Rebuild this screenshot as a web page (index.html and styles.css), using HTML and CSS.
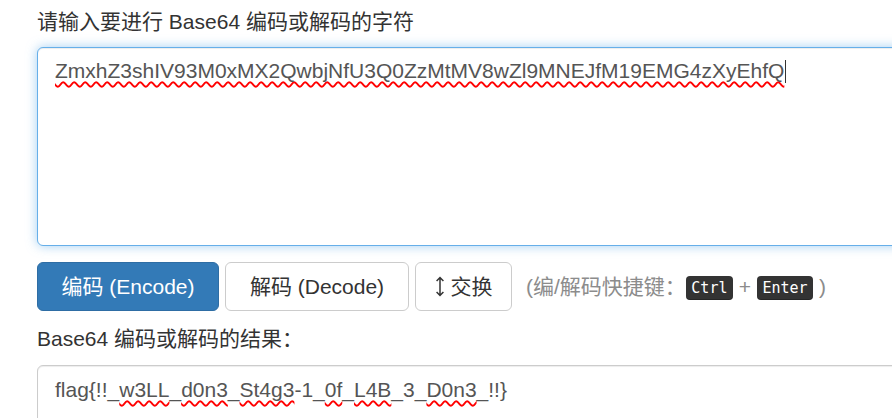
FILE: index.html
```html
<!DOCTYPE html>
<html lang="zh-CN">
<head>
    <meta charset="UTF-8">
    <meta name="viewport" content="width=device-width, initial-scale=1.0">
    <title>Base64 编码/解码</title>
    <link rel="stylesheet" href="styles.css">
</head>
<body>
    <div class="page">
        <label class="field-label" for="source">请输入要进行 Base64 编码或解码的字符</label>
        <div id="source" class="form-control source-box is-focused" role="textbox" aria-multiline="true"><span class="typo">ZmxhZ3shIV93M0xMX2QwbjNfU3Q0ZzMtMV8wZl9MNEJfM19EMG4zXyEhfQ</span><span class="caret"></span></div>

        <div class="actions">
            <button class="btn btn-primary btn-encode">编码 (Encode)</button>
            <button class="btn btn-default btn-decode">解码 (Decode)</button>
            <button class="btn btn-default btn-swap">
                <svg class="icon-swap" width="10" height="21" viewBox="0 0 10 21" aria-hidden="true">
                    <path d="M5 1.5v18M1.6 5L5 1.5 8.4 5M1.6 16L5 19.5 8.4 16" fill="none" stroke="#333" stroke-width="1.5"/>
                </svg>
                交换
            </button>
            <span class="hint">(编/解码快捷键：<kbd>Ctrl</kbd> + <kbd>Enter</kbd> )</span>
        </div>

        <label class="field-label result-label" for="result">Base64 编码或解码的结果：</label>
        <div id="result" class="form-control result-box" role="textbox" aria-readonly="true">flag{!!_<span class="typo">w3LL</span>_<span class="typo">d0n3</span>_<span class="typo">St4g3</span>-1_<span class="typo">0f</span>_<span class="typo">L4B</span>_3_<span class="typo">D0n3</span>_!!}</div>
    </div>
</body>
</html>
```

FILE: styles.css
```css
html, body {
    margin: 0;
    overflow: hidden;
    background: #fff;
}
body {
    font-family: "Liberation Sans", Arial, "Noto Sans CJK SC", sans-serif;
    font-size: 21px;
    line-height: 30px;
    color: #333;
}
.page {
    padding: 7px 0 0 37px;
}
.field-label {
    display: block;
    margin-bottom: 10px;
    font-weight: normal;
}
.result-label {
    margin-top: 13px;
    margin-bottom: 11px;
}
.form-control {
    box-sizing: border-box;
    width: 880px;
    padding: 8px 17px;
    background-color: #fff;
    border: 1px solid #ccc;
    border-radius: 6px;
    color: #555;
    box-shadow: inset 0 1px 1px rgba(0, 0, 0, 0.075);
    white-space: nowrap;
}
.source-box {
    height: 199px;
}
.is-focused {
    border-color: #66afe9;
    box-shadow: inset 0 1px 1px rgba(0, 0, 0, 0.075), 0 0 11px rgba(102, 175, 233, 0.6);
}
.result-box {
    height: 120px;
    padding-top: 9px;
}
.typo {
    text-decoration: underline wavy #f00;
    text-decoration-thickness: 1.6px;
    text-underline-offset: 3px;
    text-decoration-skip-ink: none;
}
.caret {
    display: inline-block;
    width: 1px;
    height: 23px;
    margin-left: 1px;
    vertical-align: -5px;
    background: #333;
}
.actions {
    display: flex;
    align-items: center;
    gap: 6px;
    margin-top: 16px;
}
.btn {
    box-sizing: border-box;
    height: 49px;
    padding: 0;
    font-family: inherit;
    font-size: 21px;
    line-height: 30px;
    border: 1px solid transparent;
    border-radius: 6px;
    cursor: pointer;
    display: inline-flex;
    align-items: center;
    justify-content: center;
}
.btn-primary {
    background-color: #337ab7;
    border-color: #2e6da4;
    color: #fff;
}
.btn-default {
    background-color: #fff;
    border-color: #ccc;
    color: #333;
}
.btn-encode {
    width: 182px;
}
.btn-decode {
    width: 184px;
}
.btn-swap {
    width: 97px;
    gap: 6px;
}
.icon-swap {
    display: block;
}
.hint {
    margin-left: 8px;
    color: #8c8c8c;
}
kbd {
    display: inline-block;
    padding: 0 5.5px;
    font-family: "DejaVu Sans Mono", "Liberation Mono", monospace;
    font-size: 15px;
    line-height: 24px;
    color: #fff;
    background-color: #333;
    border-radius: 4px;
    box-shadow: inset 0 -1px 0 rgba(0, 0, 0, 0.25);
    vertical-align: 1px;
}
```
